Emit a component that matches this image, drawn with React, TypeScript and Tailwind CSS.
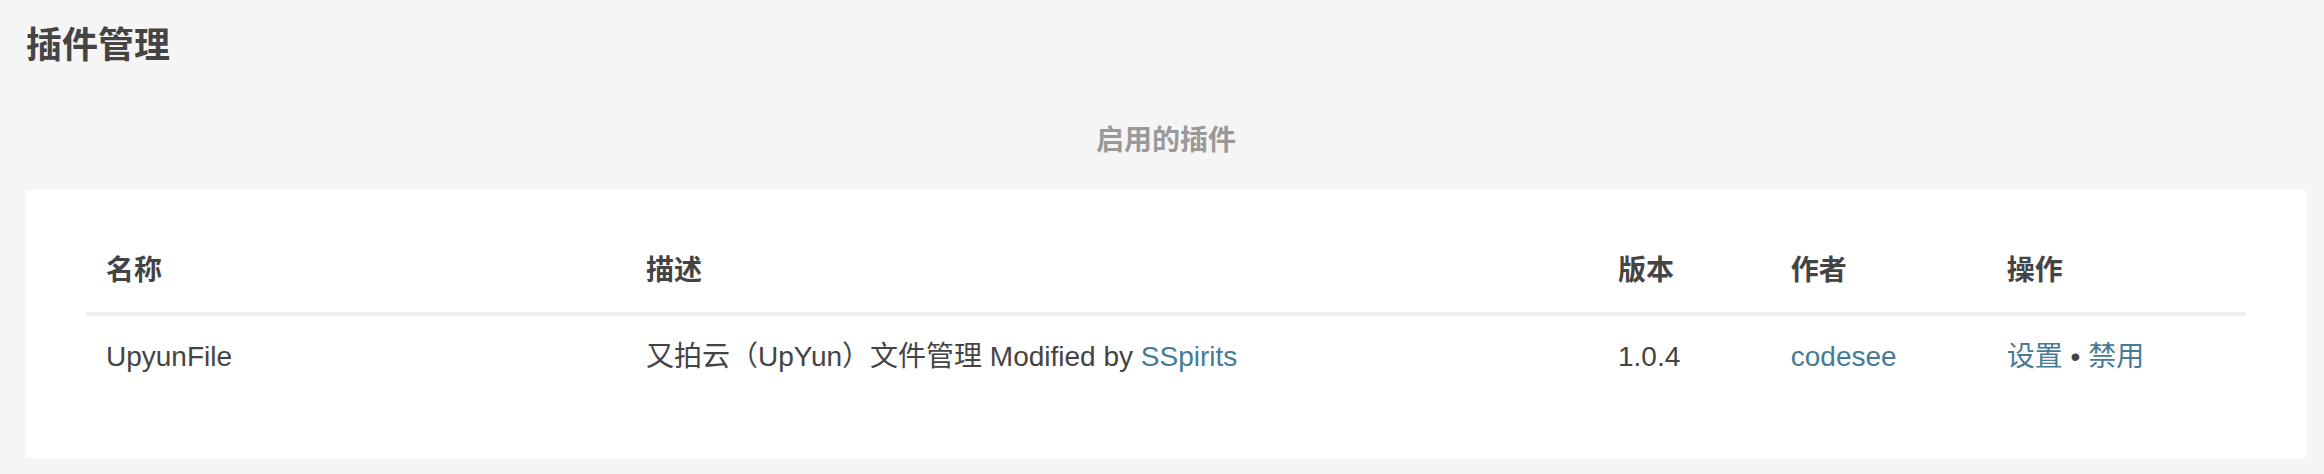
const plugins = [
  {
    name: "UpyunFile",
    desc: "又拍云（UpYun）文件管理 Modified by",
    descLink: "SSpirits",
    version: "1.0.4",
    author: "codesee",
  },
];

const App = () => {
  return (
    <div
      className="min-h-[474px] bg-[#f6f5f5] text-[#444] text-[28px] leading-[42px]"
      style={{ fontFamily: '"Liberation Sans", Arial, "Noto Sans CJK SC", sans-serif' }}
    >
      <div className="pl-[26px] pr-[18px]">
        {/* page title */}
        <h2 className="pt-[19px] text-[36px] leading-[54px] font-bold">插件管理</h2>

        {/* enabled plugins */}
        <h4 className="mt-[47px] mb-[28px] text-center font-bold text-[#999]">启用的插件</h4>

        <div className="bg-white p-[60px]">
          <table className="w-full table-fixed border-collapse text-left">
            <colgroup>
              <col className="w-[25%]" />
              <col className="w-[45%]" />
              <col className="w-[8%]" />
              <col className="w-[10%]" />
              <col className="w-[12%]" />
            </colgroup>
            <thead>
              <tr>
                {["名称", "描述", "版本", "作者", "操作"].map((h) => (
                  <th
                    key={h}
                    className="px-[20px] pt-0 pb-[20px] font-bold border-b-4 border-[#efeeee]"
                  >
                    {h}
                  </th>
                ))}
              </tr>
            </thead>
            <tbody>
              {plugins.map((p) => (
                <tr key={p.name}>
                  <td className="p-[20px]">{p.name}</td>
                  <td className="p-[20px]">
                    {p.desc} <a href="#" className="text-[#467b96]">{p.descLink}</a>
                  </td>
                  <td className="p-[20px]">{p.version}</td>
                  <td className="p-[20px]">
                    <a href="#" className="text-[#467b96]">{p.author}</a>
                  </td>
                  <td className="p-[20px]">
                    <a href="#" className="text-[#467b96]">设置</a> &bull;{" "}
                    <a href="#" className="text-[#467b96]">禁用</a>
                  </td>
                </tr>
              ))}
            </tbody>
          </table>
        </div>
      </div>
    </div>
  );
};

export default App;
